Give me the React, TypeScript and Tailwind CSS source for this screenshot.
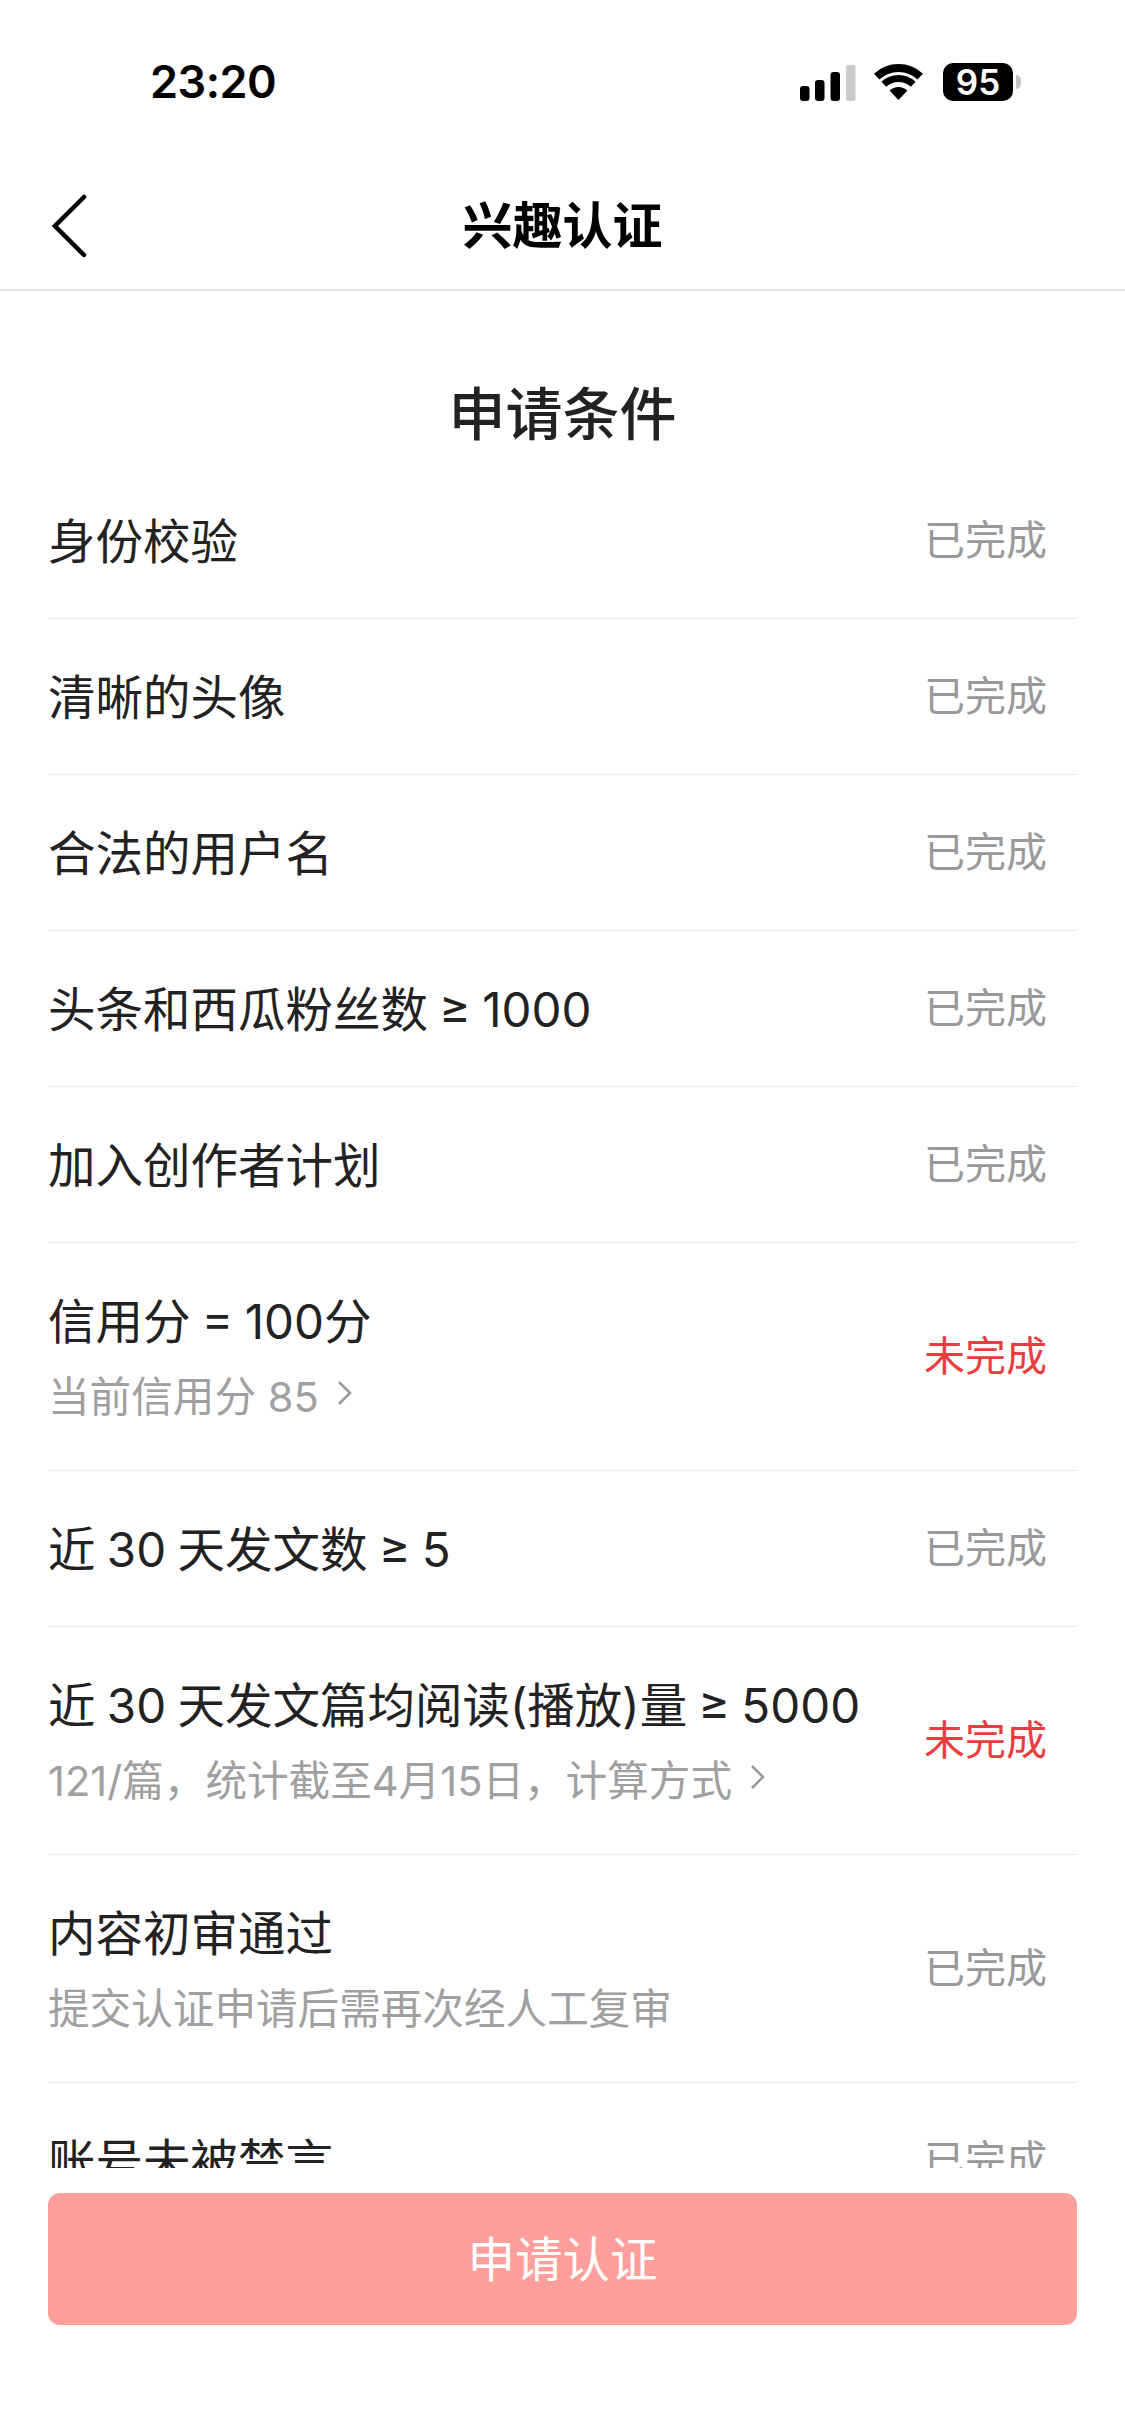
import React from 'react'

type Condition = {
    title: string;
    done: boolean;
    note?: string;
    link?: boolean;
}

const conditions: Condition[] = [
    { title: '身份校验', done: true },
    { title: '清晰的头像', done: true },
    { title: '合法的用户名', done: true },
    { title: '头条和西瓜粉丝数 ≥ 1000', done: true },
    { title: '加入创作者计划', done: true },
    { title: '信用分 = 100分', done: false, note: '当前信用分 85', link: true },
    { title: '近 30 天发文数 ≥ 5', done: true },
    { title: '近 30 天发文篇均阅读(播放)量 ≥ 5000', done: false, note: '121/篇\uFF0C统计截至4月15日\uFF0C计算方式', link: true },
    { title: '内容初审通过', done: true, note: '提交认证申请后需再次经人工复审' },
    { title: '账号未被禁言', done: true },
]

const StatusIcons = () => (
    <div className="flex items-center">
        {/* signal */}
        <svg width="56" height="36" viewBox="0 0 56 36" className="mt-[1px]">
            <rect x="0" y="21" width="9.5" height="15" rx="3" fill="#000" />
            <rect x="15" y="15" width="9.5" height="21" rx="3" fill="#000" />
            <rect x="30.5" y="7" width="9.5" height="29" rx="3" fill="#000" />
            <rect x="46" y="0" width="9.5" height="36" rx="2" fill="#ccc" />
        </svg>
        {/* wifi */}
        <svg width="49" height="36" viewBox="0 0 49 36" className="ml-[18px]">
            <path d="M2.7 12.6 A32 32 0 0 1 46.3 12.6" fill="none" stroke="#000" strokeWidth="8" />
            <path d="M9.8 20.3 A21.5 21.5 0 0 1 39.2 20.3" fill="none" stroke="#000" strokeWidth="7" />
            <path d="M24.5 36 L15.6 26.5 A13 13 0 0 1 33.4 26.5 Z" fill="#000" />
        </svg>
        {/* battery */}
        <div className="ml-[20px] flex h-[38px] w-[70px] items-center justify-center rounded-[10px] bg-black">
            <span className="text-[35px] leading-none font-semibold text-white font-['Inter',sans-serif]">95</span>
        </div>
        <div className="ml-[3px] h-[14px] w-[5px] rounded-r-full bg-[#c4c4c4]"></div>
    </div>
)

const Chevron = () => (
    <svg width="16" height="26" viewBox="0 0 16 26" className="ml-[18px] -mt-[8px] shrink-0">
        <path d="M2 2 L13 13 L2 24" fill="none" stroke="#999" strokeWidth="2.5" />
    </svg>
)

const ConditionRow = ({ item }: { item: Condition }) => (
    <div className={`flex items-center justify-between border-b-[1.5px] border-[#ececec] pr-[30px] ${item.note ? 'h-[228px]' : 'h-[156px]'}`}>
        <div className="pt-[2px]">
            <p className="text-[47.5px] leading-[60px] text-[#222] [word-spacing:-2px]">{item.title}</p>
            {item.note && (
                <div className="mt-[18px] flex items-center text-[41.6px] leading-[54px] text-[#a0a0a0]">
                    <span>{item.note}</span>
                    {item.link && <Chevron />}
                </div>
            )}
        </div>
        <span className={`shrink-0 text-[41px] ${item.done ? 'text-[#999]' : 'text-[#ea3d40]'}`}>
            {item.done ? '已完成' : '未完成'}
        </span>
    </div>
)

export default function App() {
    return (
        <div className="flex h-[2436px] w-[1125px] flex-col overflow-hidden bg-white font-['Inter','Noto_Sans_CJK_SC',sans-serif]">
            <div className="flex h-[164px] shrink-0 items-center justify-between pr-[104px] pl-[150px]">
                <span className="text-[45px] font-semibold tracking-[-0.5px] text-black">23:20</span>
                <StatusIcons />
            </div>

            <div className="relative flex h-[127px] shrink-0 items-center justify-center border-b-[2px] border-[#e6e6e6]">
                <svg width="36" height="64" viewBox="0 0 36 64" className="absolute top-[30px] left-[52px]">
                    <path d="M32 3 L3 32 L32 61" fill="none" stroke="#000" strokeWidth="4.5" strokeLinecap="round" />
                </svg>
                <h1 className="text-[50px] font-bold text-black">兴趣认证</h1>
            </div>

            <div className="min-h-0 flex-1 overflow-hidden px-[48px]">
                <h2 className="h-[172px] pt-[87px] text-center text-[57px] leading-[74px] font-medium text-[#222]">申请条件</h2>
                {conditions.map((item) => (
                    <ConditionRow key={item.title} item={item} />
                ))}
            </div>

            <div className="h-[268px] shrink-0 px-[48px] pt-[25px]">
                <button className="h-[132px] w-full rounded-[12px] bg-[#ff9f9c] pt-[2px] text-[47.5px] text-white">申请认证</button>
            </div>
        </div>
    )
}
